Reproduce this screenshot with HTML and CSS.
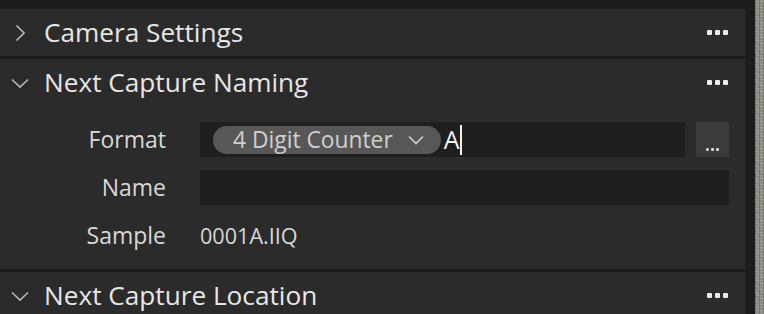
FILE: index.html
```html
<!DOCTYPE html>
<html>
<head>
<meta charset="utf-8">
<link rel="stylesheet" href="styles.css">
</head>
<body>
<div class="screen">
  <div class="frame">
    <div class="panel">
      <section class="tool">
        <header class="tool-head">
          <svg class="chev" viewBox="0 0 18 18" width="18" height="18"><path d="M5.5 1.5 L13 9 L5.5 16.5" fill="none" stroke="#b4b4b4" stroke-width="1.7"/></svg>
          <span class="tool-title">Camera Settings</span>
          <span class="more"><i></i><i></i><i></i></span>
        </header>
      </section>
      <section class="tool">
        <header class="tool-head">
          <svg class="chev" viewBox="0 0 18 18" width="18" height="18"><path d="M1 5.5 L9 13 L17 5.5" fill="none" stroke="#b4b4b4" stroke-width="1.7"/></svg>
          <span class="tool-title">Next Capture Naming</span>
          <span class="more"><i></i><i></i><i></i></span>
        </header>
        <div class="tool-body">
          <div class="row">
            <span class="label">Format</span>
            <div class="field-group">
              <div class="field format-field">
                <span class="token">4 Digit Counter
                  <svg class="token-chev" viewBox="0 0 16 10" width="16" height="10"><path d="M1 1.5 L8 8.5 L15 1.5" fill="none" stroke="#cccccc" stroke-width="1.7"/></svg>
                </span>
                <span class="typed">A</span><span class="caret"></span>
              </div>
              <button class="browse"><i></i><i></i><i></i></button>
            </div>
          </div>
          <div class="row">
            <span class="label">Name</span>
            <div class="field"></div>
          </div>
          <div class="row">
            <span class="label">Sample</span>
            <span class="value">0001A.IIQ</span>
          </div>
        </div>
      </section>
      <section class="tool">
        <header class="tool-head">
          <svg class="chev" viewBox="0 0 18 18" width="18" height="18"><path d="M1 5.5 L9 13 L17 5.5" fill="none" stroke="#b4b4b4" stroke-width="1.7"/></svg>
          <span class="tool-title">Next Capture Location</span>
          <span class="more"><i></i><i></i><i></i></span>
        </header>
      </section>
    </div>
  </div>
  <div class="texture"></div>
</div>
</body>
</html>
```
FILE: styles.css
```css
html, body {
  margin: 0;
  padding: 0;
  background: #1c1c1c;
  overflow: hidden;
}
body {
  font-family: "Open Sans", "Noto Sans", "Liberation Sans", sans-serif;
  color: #e2e2e2;
}
.screen {
  display: flex;
  width: 764px;
  height: 314px;
}
.frame {
  width: 745px;
  padding: 9px 10px 0 0;
  background: #1c1c1c;
}
.texture {
  width: 9px;
  background-color: #8a8680;
  background-image:
    repeating-linear-gradient(0deg, rgba(255,255,255,0.12) 0 1px, transparent 1px 3px),
    repeating-linear-gradient(90deg, rgba(0,0,0,0.18) 0 1px, transparent 1px 4px),
    repeating-linear-gradient(45deg, rgba(255,255,255,0.08) 0 2px, transparent 2px 5px);
}
.panel {
  display: flex;
  flex-direction: column;
  gap: 3px;
}
.tool {
  background: #2b2b2b;
}
.tool-head {
  height: 47px;
  display: flex;
  align-items: center;
  padding: 0 16px 0 11px;
}
.chev {
  flex: none;
  margin-right: 15px;
}
.tool-title {
  flex: 1;
  font-size: 26.2px;
  line-height: 1;
  color: #e6e6e6;
}
.more {
  display: flex;
  gap: 3px;
  margin-right: 1px;
}
.more i {
  width: 5px;
  height: 5px;
  border-radius: 1px;
  background: #ececec;
}
.tool-body {
  display: flex;
  flex-direction: column;
  gap: 13px;
  padding: 16px 16px 16px 0;
}
.row {
  display: grid;
  grid-template-columns: 166px 1fr;
  column-gap: 34px;
  align-items: center;
  height: 35px;
}
.label {
  text-align: right;
  font-size: 23px;
  line-height: 1;
  color: #d8d8d8;
}
.field-group {
  display: flex;
  gap: 11px;
  height: 35px;
}
.field {
  height: 35px;
  background: #1f1f1f;
}
.format-field {
  flex: 1;
  display: flex;
  align-items: center;
  padding-left: 13px;
}
.token {
  display: flex;
  align-items: center;
  height: 28px;
  border-radius: 14px;
  background: #575757;
  padding: 0 17px 0 20px;
  font-size: 22.8px;
  line-height: 1;
  color: #cfcfcf;
  margin-top: 1px;
}
.token-chev {
  margin-left: 15px;
}
.typed {
  margin-left: 3px;
  font-size: 25px;
  line-height: 1;
  color: #f4f4f4;
}
.caret {
  width: 2px;
  height: 30px;
  background: #f0f0f0;
}
.browse {
  width: 33px;
  height: 35px;
  border: 0;
  padding: 0 0 6px;
  background: #3b3b3b;
  display: flex;
  align-items: flex-end;
  justify-content: center;
  gap: 2px;
}
.browse i {
  width: 3px;
  height: 3px;
  border-radius: 1px;
  background: #d8d8d8;
}
.value {
  font-size: 21.6px;
  line-height: 1;
  color: #d8d8d8;
}
```
